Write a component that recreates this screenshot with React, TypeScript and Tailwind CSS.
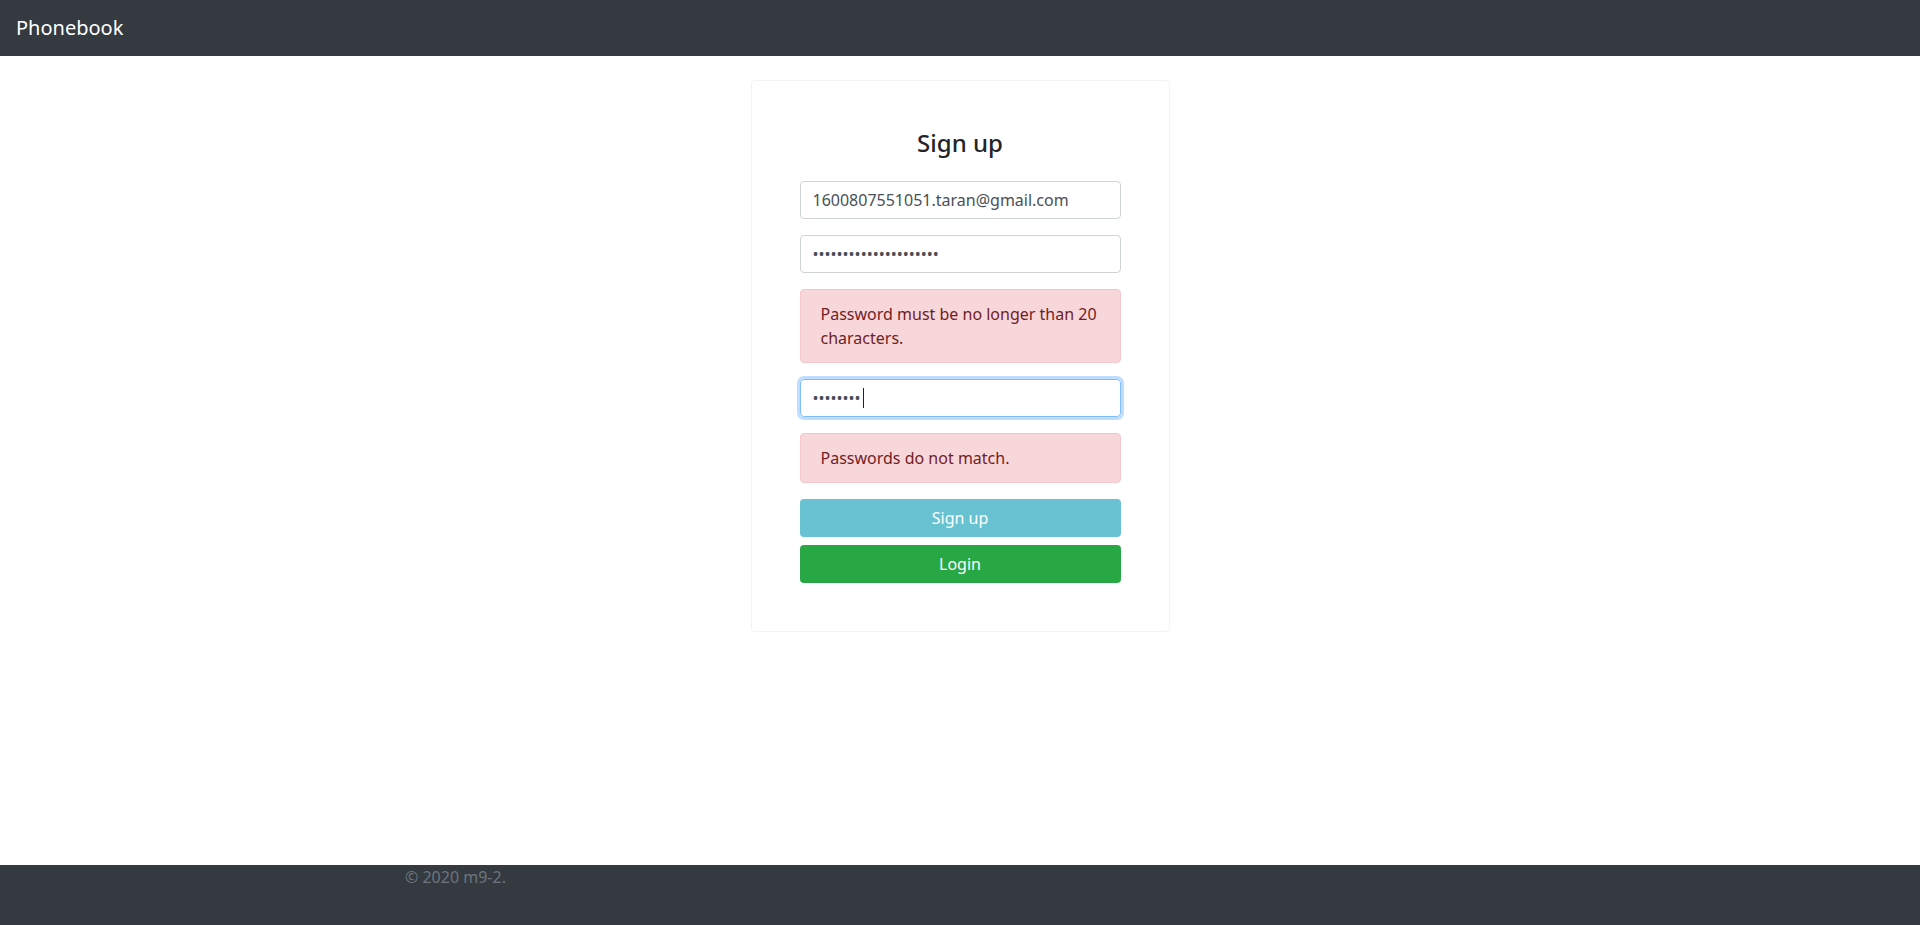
import React from "react";

const font = { fontFamily: '"Noto Sans", "Open Sans", Arial, sans-serif' };

export default function App() {
  return (
    <div className="min-h-screen flex flex-col bg-white text-[#212529]" style={font}>
      <nav className="h-[56px] bg-[#343a40] flex items-center px-4 shrink-0">
        <span className="text-[20px] leading-[30px] text-white">Phonebook</span>
      </nav>
      <main className="flex-1 flex justify-center pt-6">
        <div className="w-[419px] self-start border border-[#f3f3f3] rounded-[4px] p-12 flex flex-col">
          <h4 className="text-[24px] leading-[1.2] font-medium text-center mb-[23px] text-[#212529]">Sign up</h4>
          <input
            type="email"
            readOnly
            defaultValue="1600807551051.taran@gmail.com"
            className="h-[38px] w-full border border-[#ced4da] rounded-[4px] px-3 text-[16px] leading-[24px] text-[#495057] outline-none mb-4"
          />
          <input
            type="password"
            readOnly
            defaultValue="123456789012345678901"
            className="h-[38px] w-full border border-[#ced4da] rounded-[4px] px-3 text-[16px] leading-[24px] text-[#495057] outline-none mb-4"
          />
          <div className="bg-[#f8d7da] border border-[#f5c6cb] text-[#721c24] rounded-[4px] px-5 py-3 text-[16px] leading-[24px] mb-4">
            Password must be no longer than 20 characters.
          </div>
          <div className="relative mb-4">
            <input
              type="password"
              readOnly
              defaultValue="12345678"
              className="h-[38px] w-full border border-[#80bdff] rounded-[4px] px-3 text-[16px] leading-[24px] text-[#495057] outline-none caret-transparent shadow-[0_0_0_3px_rgba(0,123,255,0.25)]"
            />
            <span className="absolute left-[63px] top-[9px] h-[20px] w-px bg-[#222]" />
          </div>
          <div className="bg-[#f8d7da] border border-[#f5c6cb] text-[#721c24] rounded-[4px] px-5 py-3 text-[16px] leading-[24px] mb-4">
            Passwords do not match.
          </div>
          <button className="h-[38px] w-full rounded-[4px] bg-[#68c2d1] text-white text-[16px] leading-[24px] mb-2">
            Sign up
          </button>
          <button className="h-[38px] w-full rounded-[4px] bg-[#28a745] text-white text-[16px] leading-[24px]">
            Login
          </button>
        </div>
      </main>
      <footer className="h-[60px] bg-[#343a40] shrink-0">
        <div className="max-w-[1140px] mx-auto px-[15px]">
          <span className="text-[16px] leading-[24px] text-[#6c757d]">© 2020 m9-2.</span>
        </div>
      </footer>
    </div>
  );
}
